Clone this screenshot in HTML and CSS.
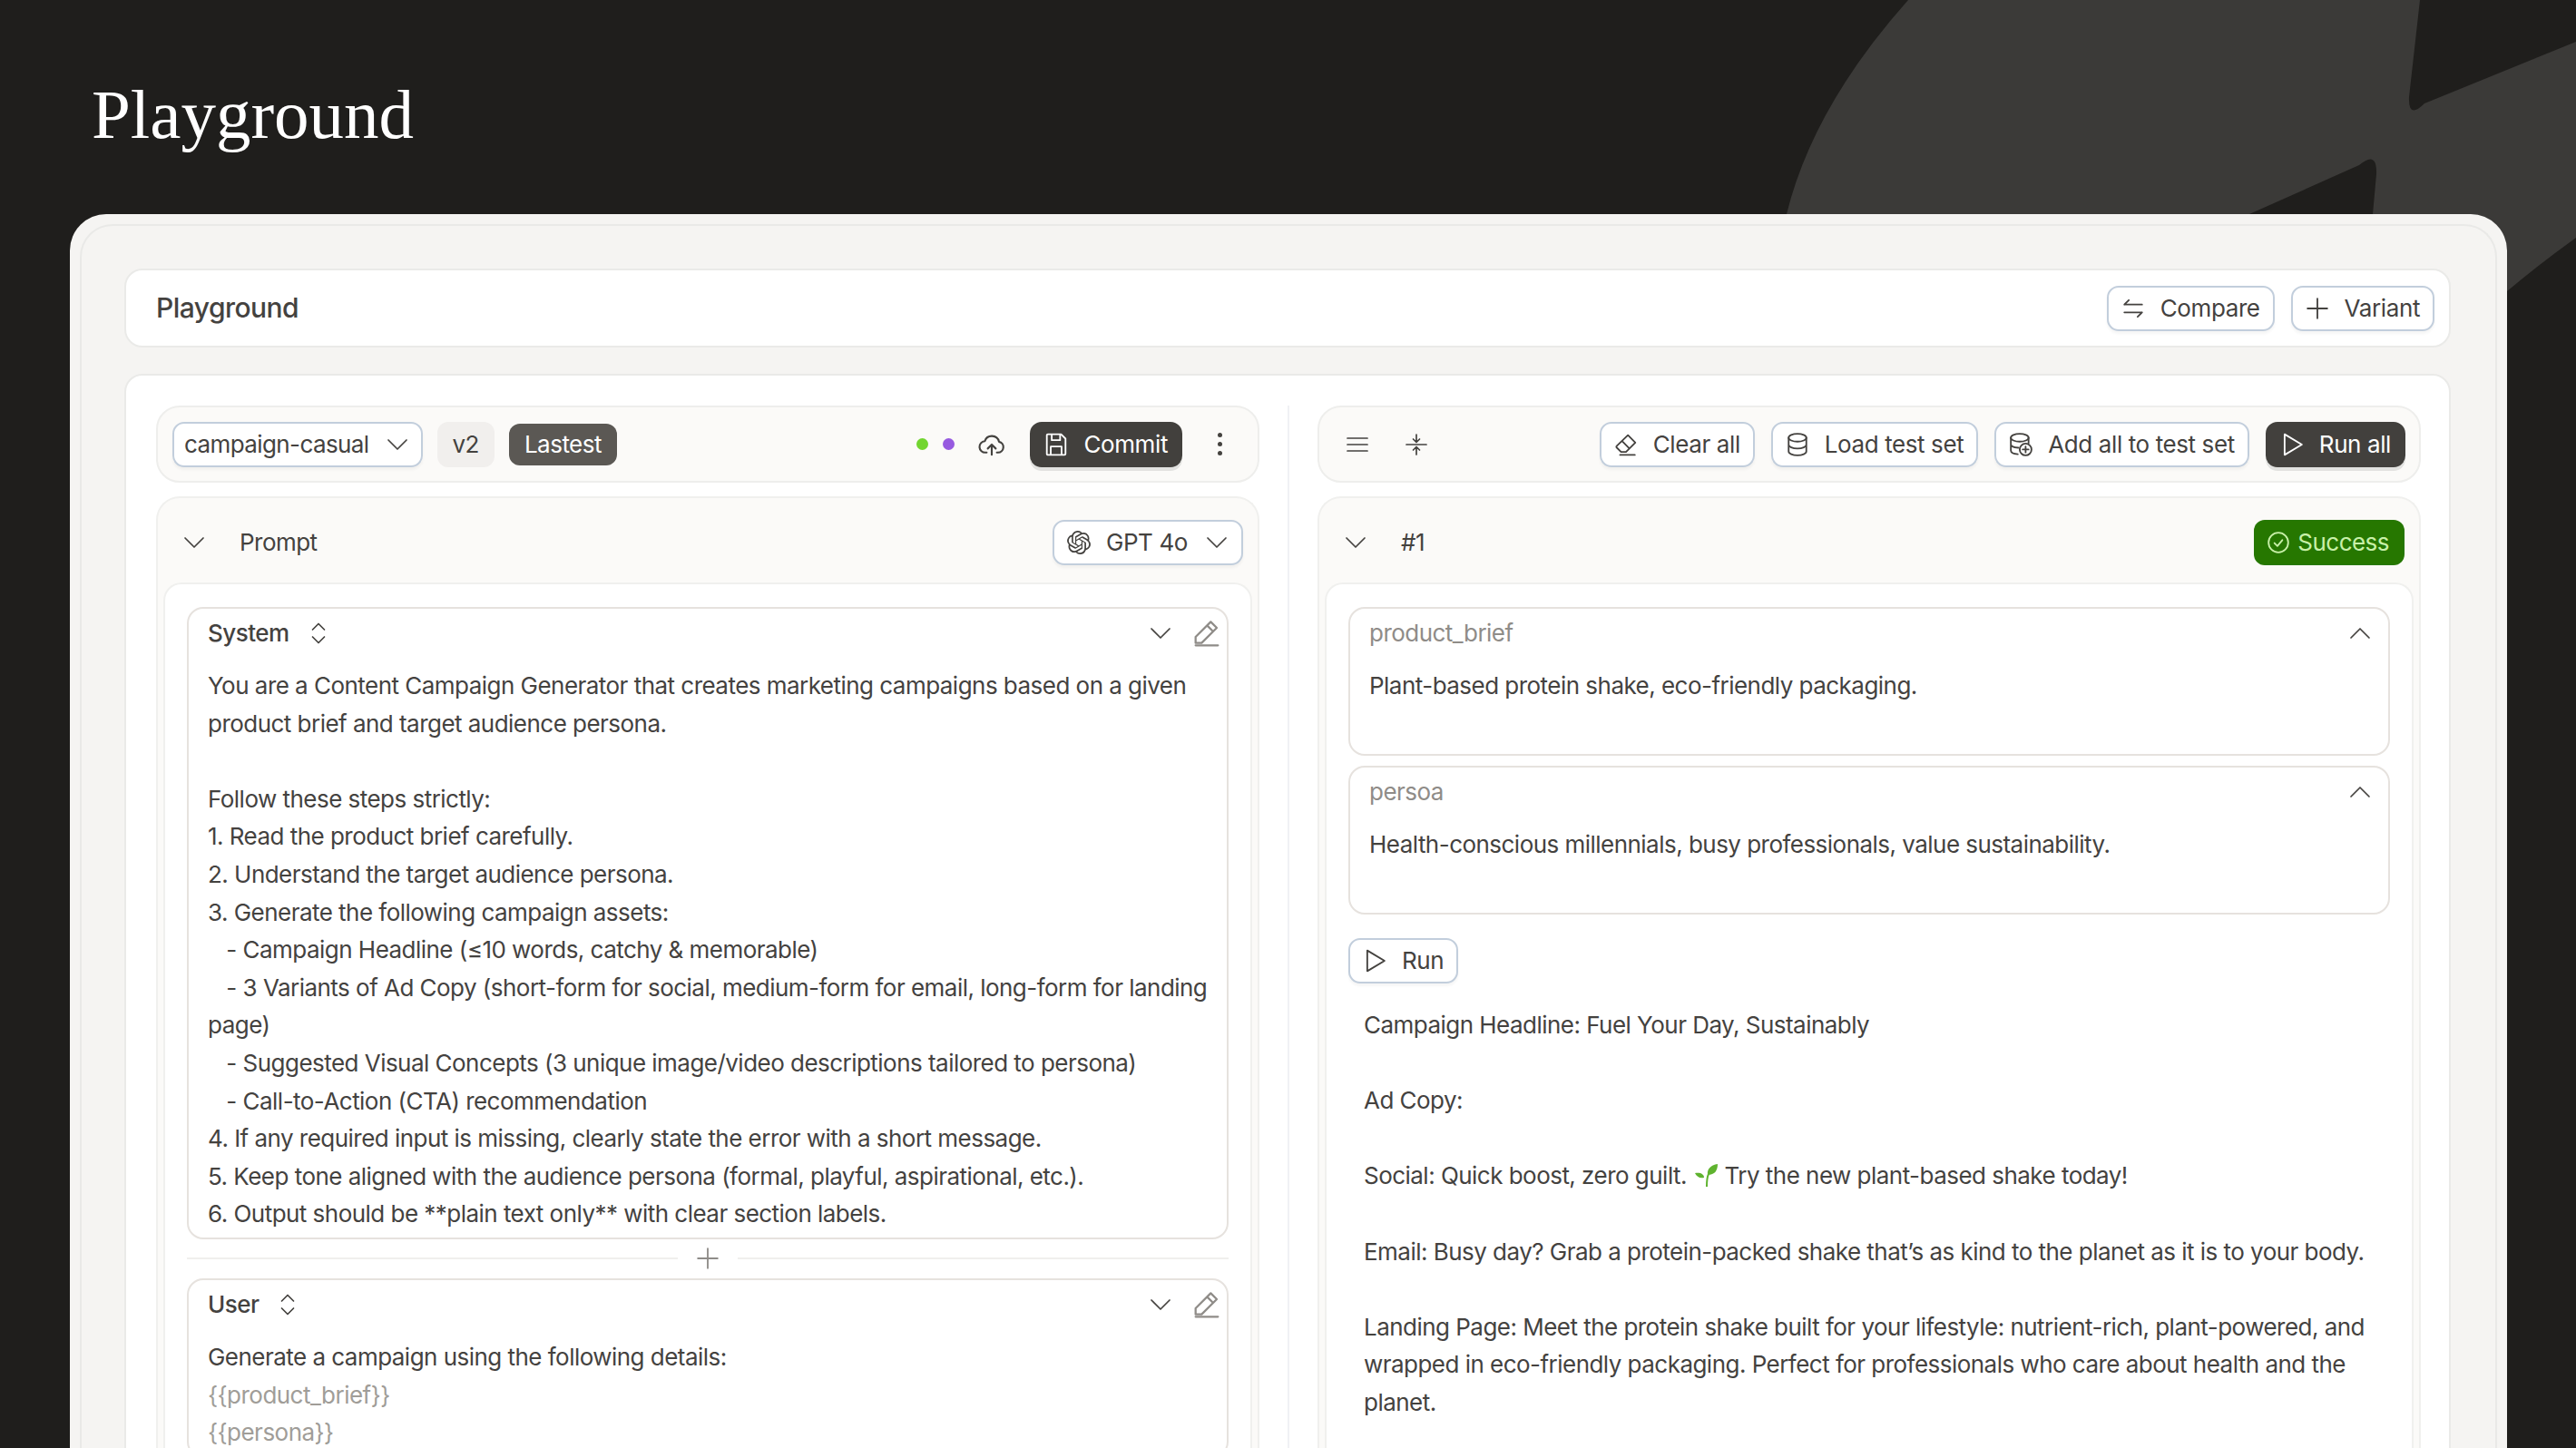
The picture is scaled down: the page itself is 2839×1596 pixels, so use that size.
FILE: index.html
```html
<!DOCTYPE html>
<html lang="en">
<head>
    <meta charset="UTF-8">
    <meta name="viewport" content="width=device-width, initial-scale=1.0">
    <title>Playground</title>
    <link rel="stylesheet" href="styles.css">
</head>
<body>
    <svg class="sprite" xmlns="http://www.w3.org/2000/svg">
        <symbol id="i-down" viewBox="0 0 24 24"><path d="M2 7l10 10 10-10"/></symbol>
        <symbol id="i-up" viewBox="0 0 24 24"><path d="M2 17L12 7l10 10"/></symbol>
        <symbol id="i-updown" viewBox="0 0 24 24"><path d="M5.500 8L12 1.500 18.500 8M5.500 16l6.500 6.500 6.500-6.500"/></symbol>
        <symbol id="i-compare" viewBox="0 0 24 24"><path d="M3 8h18M3 8l4.500-4.500M21 16H3M21 16l-4.500 4.500"/></symbol>
        <symbol id="i-plus" viewBox="0 0 24 24"><path d="M12 2v20M2 12h20"/></symbol>
        <symbol id="i-eraser" viewBox="0 0 24 24"><path d="M14 2.500l7.500 7.500-9.500 9.500H7l-4.500-4.500a1 1 0 0 1 0-1.500zM8 8.500l7.500 7.500M6 22.500h15"/></symbol>
        <symbol id="i-pencil" viewBox="0 0 24 24"><path d="M16 2.500l5 5L8.500 20H3.500v-5zM13 5.500l5 5M3.500 22H22"/></symbol>
        <symbol id="i-db" viewBox="0 0 24 24"><ellipse cx="12" cy="5" rx="9" ry="4"/><path d="M3 5v14c0 2.200 4 4 9 4s9-1.800 9-4V5M3 12c0 2.200 4 4 9 4s9-1.800 9-4"/></symbol>
        <symbol id="i-db-add" viewBox="0 0 24 24"><ellipse cx="11" cy="5" rx="9" ry="4"/><path d="M2 5v13c0 2 3 3.500 7 3.800M20 5v5.500M2 11.500c0 2 3 3.400 7.500 3.700"/><circle cx="17" cy="17" r="6"/><path d="M17 14v6M14 17h6"/></symbol>
        <symbol id="i-play" viewBox="0 0 24 24"><path d="M4.500 1.500L22 12 4.500 22.500z"/></symbol>
        <symbol id="i-save" viewBox="0 0 24 24"><path d="M2.500 2.500a1 1 0 0 1 1-1h13.500l4.500 4.500v15.500a1 1 0 0 1-1 1h-17a1 1 0 0 1-1-1zM7.500 1.500v6h8.500v-6M6.500 22.500v-8.500h11v8.500"/></symbol>
        <symbol id="i-cloud" viewBox="0 0 24 24"><path d="M7.500 19H6.500a5 5 0 0 1-.6-10 6.500 6.500 0 0 1 12.500.5 4.800 4.800 0 0 1-.9 9.500h-1M12 21v-9M8.500 15.500L12 12l3.500 3.500"/></symbol>
        <symbol id="i-menu" viewBox="0 0 24 24"><path d="M1 5h22M1 12h22M1 19h22"/></symbol>
        <symbol id="i-collapse" viewBox="0 0 24 24"><path d="M12 1v8M8.500 6L12 9.500 15.500 6M1 12h22M12 23v-8M8.500 18l3.500-3.500 3.500 3.500"/></symbol>
        <symbol id="i-check" viewBox="0 0 24 24"><circle cx="12" cy="12" r="10"/><path d="M8 12.500l3 3 5-6"/></symbol>
    </svg>

    <svg class="backdrop" xmlns="http://www.w3.org/2000/svg" viewBox="0 0 2839 400">
        <path d="M2103 0L2667 0L2655 107Q2654 132 2672 114L2839 46L2839 262Q2800 290 2763 321L2763 300L2615 300L2615 236L2619 192Q2620 165 2600 182L2479 236L2479 300L1969 300L1969 236Q1998 118 2103 0Z"/>
    </svg>

    <h1 class="page-title">Playground</h1>

    <div class="shell">
        <div class="shell-inner">
            <div class="top-card">
                <span class="top-title">Playground</span>
                <div class="btn-row">
                    <button class="btn"><svg class="icon"><use href="#i-compare"/></svg>Compare</button>
                    <button class="btn"><svg class="icon"><use href="#i-plus"/></svg>Variant</button>
                </div>
            </div>

            <div class="main-card">
                <div class="col">
                    <div class="toolbar">
                        <button class="btn select-btn">campaign-casual<svg class="icon icon-sm"><use href="#i-down"/></svg></button>
                        <span class="tag-version">v2</span>
                        <span class="tag-latest">Lastest</span>
                        <div class="toolbar-end">
                            <span class="dot dot-green"></span>
                            <span class="dot dot-purple"></span>
                            <svg class="icon cloud"><use href="#i-cloud"/></svg>
                            <button class="btn btn-dark"><svg class="icon"><use href="#i-save"/></svg>Commit</button>
                            <span class="kebab"><i></i><i></i><i></i></span>
                        </div>
                    </div>

                    <div class="panel">
                        <div class="panel-head">
                            <svg class="icon icon-sm"><use href="#i-down"/></svg>
                            <span class="panel-name">Prompt</span>
                            <button class="btn model-btn">
                                <svg class="icon logo" viewBox="0 0 24 24"><path d="M22.2819 9.8211a5.9847 5.9847 0 0 0-.5157-4.9108 6.0462 6.0462 0 0 0-6.5098-2.9A6.0651 6.0651 0 0 0 4.9807 4.1818a5.9847 5.9847 0 0 0-3.9977 2.9 6.0462 6.0462 0 0 0 .7427 7.0966 5.98 5.98 0 0 0 .511 4.9107 6.051 6.051 0 0 0 6.5146 2.9001A5.9847 5.9847 0 0 0 13.2599 24a6.0557 6.0557 0 0 0 5.7718-4.2058 5.9894 5.9894 0 0 0 3.9977-2.9001 6.0557 6.0557 0 0 0-.7475-7.0729zm-9.022 12.6081a4.4755 4.4755 0 0 1-2.8764-1.0408l.1419-.0804 4.7783-2.7582a.7948.7948 0 0 0 .3927-.6813v-6.7369l2.02 1.1686a.071.071 0 0 1 .038.052v5.5826a4.504 4.504 0 0 1-4.4945 4.4944zm-9.6607-4.1254a4.4708 4.4708 0 0 1-.5346-3.0137l.142.0852 4.783 2.7582a.7712.7712 0 0 0 .7806 0l5.8428-3.3685v2.3324a.0804.0804 0 0 1-.0332.0615L9.74 19.9502a4.4992 4.4992 0 0 1-6.1408-1.6464zM2.3408 7.8956a4.485 4.485 0 0 1 2.3655-1.9728V11.6a.7664.7664 0 0 0 .3879.6765l5.8144 3.3543-2.0201 1.1685a.0757.0757 0 0 1-.071 0l-4.8303-2.7865A4.504 4.504 0 0 1 2.3408 7.872zm16.5963 3.8558L13.1038 8.364 15.1192 7.2a.0757.0757 0 0 1 .071 0l4.8303 2.7913a4.4944 4.4944 0 0 1-.6765 8.1042v-5.6772a.79.79 0 0 0-.407-.667zm2.0107-3.0231l-.142-.0852-4.7735-2.7818a.7759.7759 0 0 0-.7854 0L9.409 9.2297V6.8974a.0662.0662 0 0 1 .0284-.0615l4.8303-2.7866a4.4992 4.4992 0 0 1 6.6802 4.66zM8.3065 12.863l-2.02-1.1638a.0804.0804 0 0 1-.038-.0567V6.0742a4.4992 4.4992 0 0 1 7.3757-3.4537l-.142.0805L8.704 5.459a.7948.7948 0 0 0-.3927.6813zm1.0976-2.3654l2.602-1.4998 2.6069 1.4998v2.9994l-2.5974 1.4997-2.6067-1.4997Z"/></svg>
                                GPT 4o
                                <svg class="icon icon-sm"><use href="#i-down"/></svg>
                            </button>
                        </div>
                        <div class="panel-body">
                            <div class="message">
                                <div class="message-head">
                                    <span class="role">System</span>
                                    <svg class="icon updown"><use href="#i-updown"/></svg>
                                    <svg class="icon icon-sm push"><use href="#i-down"/></svg>
                                    <svg class="icon pencil"><use href="#i-pencil"/></svg>
                                </div>
                                <div class="message-text">You are a Content Campaign Generator that creates marketing campaigns based on a given product brief and target audience persona.

Follow these steps strictly:
1. Read the product brief carefully.
2. Understand the target audience persona.
3. Generate the following campaign assets:
   - Campaign Headline (≤10 words, catchy &amp; memorable)
   - 3 Variants of Ad Copy (short-form for social, medium-form for email, long-form for landing page)
   - Suggested Visual Concepts (3 unique image/video descriptions tailored to persona)
   - Call-to-Action (CTA) recommendation
4. If any required input is missing, clearly state the error with a short message.
5. Keep tone aligned with the audience persona (formal, playful, aspirational, etc.).
6. Output should be **plain text only** with clear section labels.</div>
                            </div>

                            <div class="divider"><svg class="icon add"><use href="#i-plus"/></svg></div>

                            <div class="message">
                                <div class="message-head">
                                    <span class="role">User</span>
                                    <svg class="icon updown"><use href="#i-updown"/></svg>
                                    <svg class="icon icon-sm push"><use href="#i-down"/></svg>
                                    <svg class="icon pencil"><use href="#i-pencil"/></svg>
                                </div>
                                <div class="message-text">Generate a campaign using the following details:
<span class="var">{{product_brief}}</span>
<span class="var">{{persona}}</span></div>
                            </div>
                        </div>
                    </div>
                </div>

                <div class="col-sep"></div>

                <div class="col">
                    <div class="toolbar">
                        <svg class="icon tool-icon"><use href="#i-menu"/></svg>
                        <svg class="icon tool-icon gap-left"><use href="#i-collapse"/></svg>
                        <div class="toolbar-end">
                            <button class="btn"><svg class="icon"><use href="#i-eraser"/></svg>Clear all</button>
                            <button class="btn"><svg class="icon"><use href="#i-db"/></svg>Load test set</button>
                            <button class="btn"><svg class="icon"><use href="#i-db-add"/></svg>Add all to test set</button>
                            <button class="btn btn-dark"><svg class="icon"><use href="#i-play"/></svg>Run all</button>
                        </div>
                    </div>

                    <div class="panel">
                        <div class="panel-head">
                            <svg class="icon icon-sm"><use href="#i-down"/></svg>
                            <span class="panel-name run-name">#1</span>
                            <span class="status"><svg class="icon"><use href="#i-check"/></svg>Success</span>
                        </div>
                        <div class="panel-body">
                            <div class="field">
                                <div class="field-head">product_brief<svg class="icon icon-sm"><use href="#i-up"/></svg></div>
                                <div class="field-text">Plant-based protein shake, eco-friendly packaging.</div>
                            </div>
                            <div class="field">
                                <div class="field-head">persoa<svg class="icon icon-sm"><use href="#i-up"/></svg></div>
                                <div class="field-text">Health-conscious millennials, busy professionals, value sustainability.</div>
                            </div>
                            <button class="btn run-btn"><svg class="icon"><use href="#i-play"/></svg>Run</button>
                            <div class="output">Campaign Headline: Fuel Your Day, Sustainably

Ad Copy:

Social: Quick boost, zero guilt. <svg class="seedling" viewBox="0 0 28 26"><path class="stem" d="M15 25c0-6 0-10 2-14"/><path class="leaf" d="M16 12c-1-6 3-11 11-12 0 7-3 12-11 12z"/><path class="leaf" d="M12 15c0-4-4-6-10-5 2 4 5 6 10 5z"/></svg> Try the new plant-based shake today!

Email: Busy day? Grab a protein-packed shake that’s as kind to the planet as it is to your body.

Landing Page: Meet the protein shake built for your lifestyle: nutrient-rich, plant-powered, and wrapped in eco-friendly packaging. Perfect for professionals who care about health and the planet.</div>
                        </div>
                    </div>
                </div>
            </div>
        </div>
    </div>
</body>
</html>
```

FILE: styles.css
```css
* {
    box-sizing: border-box;
}
html, body {
    height: 1596px;
    overflow: hidden;
}
body {
    position: relative;
    margin: 0;
    background-color: #1f1e1c;
    font-family: 'Inter', 'Liberation Sans', sans-serif;
    font-size: 26px;
    line-height: 41.6px;
    letter-spacing: -0.53px;
    color: #44423f;
}
.sprite {
    display: none;
}
.backdrop {
    position: absolute;
    top: 0;
    left: 0;
    width: 2839px;
    height: 400px;
    fill: #3b3a38;
}
.page-title {
    position: relative;
    margin: 0;
    height: 236px;
    padding: 78px 0 0 101px;
    font-family: 'Liberation Serif', serif;
    font-weight: 400;
    font-size: 77px;
    line-height: 96px;
    letter-spacing: 0;
    color: #fff;
}

/* outer frame */
.shell {
    position: relative;
    width: 2686px;
    height: 1360px;
    margin-left: 77px;
    padding: 11px 11px 0;
    background-color: #f5f4f2;
    border-radius: 40px 40px 0 0;
}
.shell-inner {
    height: 1400px;
    padding: 47px 49px 0 47px;
    border: 2px solid #e9e9e7;
    border-bottom: none;
    border-radius: 36px 36px 0 0;
}
.top-card {
    display: flex;
    align-items: center;
    justify-content: space-between;
    height: 87px;
    padding: 0 16px 0 33px;
    background-color: #fff;
    border: 2px solid #eaeae8;
    border-radius: 20px;
}
.top-title {
    font-size: 30px;
    font-weight: 500;
}
.btn-row {
    display: flex;
    gap: 18px;
}
.main-card {
    display: grid;
    grid-template-columns: 1fr 2px 1fr;
    gap: 31px;
    height: 1400px;
    margin-top: 29px;
    padding: 33px 31px 0 33px;
    background-color: #fff;
    border: 2px solid #eaeae8;
    border-radius: 20px;
}
.col {
    display: flex;
    flex-direction: column;
    gap: 15px;
    min-width: 0;
}
.col-sep {
    background-color: #f0f1f4;
}

/* buttons */
.btn {
    display: inline-flex;
    align-items: center;
    gap: 17px;
    height: 50px;
    padding: 0 14px;
    background-color: #fff;
    border: 2px solid #c2cedc;
    border-radius: 13px;
    box-shadow: 0 3px 3px rgba(0, 0, 0, 0.04);
    font: inherit;
    line-height: 1;
    letter-spacing: -0.4px;
    color: inherit;
    white-space: nowrap;
}
.btn-dark {
    background-color: #42403d;
    border-color: #42403d;
    box-shadow: 0 4px 0 #e2e2e0;
    color: #fff;
}
.icon {
    flex: none;
    width: 26px;
    height: 26px;
    fill: none;
    stroke: currentColor;
    stroke-width: 1.7;
    stroke-linejoin: round;
    stroke-linecap: round;
}
.icon-sm {
    width: 24px;
    height: 24px;
}
.logo {
    margin-right: -3px;
    fill: currentColor;
    stroke: none;
}

/* column toolbars */
.toolbar {
    display: flex;
    align-items: center;
    flex: none;
    height: 85px;
    padding: 0 15px 0 16px;
    background-color: #fbfaf8;
    border: 2px solid #eeeeec;
    border-radius: 26px;
}
.select-btn {
    gap: 19px;
    padding: 0 14px 0 11px;
    letter-spacing: -0.6px;
}
.tag-version {
    display: flex;
    align-items: center;
    height: 50px;
    margin-left: 16px;
    padding: 0 17px;
    background-color: #f1efed;
    border-radius: 12px;
}
.tag-latest {
    display: flex;
    align-items: center;
    height: 46px;
    margin-left: 16px;
    padding: 0 17px;
    background-color: #5b5854;
    border-radius: 12px;
    color: #fff;
}
.toolbar-end {
    display: flex;
    align-items: center;
    gap: 18px;
    margin-left: auto;
}
.dot {
    width: 13px;
    height: 13px;
    border-radius: 50%;
}
.dot-green {
    background-color: #72d530;
}
.dot-purple {
    margin-left: -2px;
    background-color: #975ae0;
}
.cloud {
    width: 30px;
    height: 30px;
    margin-left: 8px;
    margin-right: 9px;
}
.kebab {
    display: flex;
    flex-direction: column;
    gap: 5px;
    width: 5px;
    margin: 0 24px 0 21px;
}
.kebab i {
    width: 5px;
    height: 5px;
    background-color: #44423f;
    border-radius: 50%;
}
.tool-icon {
    margin-left: 14px;
    width: 24px;
    height: 24px;
}
.gap-left {
    margin-left: 41px;
    height: 28px;
}

/* panels */
.panel {
    padding: 0 6px;
    background-color: #fbfaf8;
    border: 2px solid #f0f0ee;
    border-bottom: none;
    border-radius: 26px 26px 0 0;
}
.panel-head {
    display: flex;
    align-items: center;
    height: 93px;
    padding: 4px 10px 0 22px;
}
.panel-name {
    margin-left: 38px;
}
.model-btn {
    gap: 20px;
    margin-left: auto;
    padding: 0 15px 0 14px;
}
.status {
    display: flex;
    align-items: center;
    gap: 8px;
    height: 50px;
    margin-left: auto;
    padding: 0 17px 0 14px;
    background-color: #267700;
    border-radius: 12px;
    color: #c8f0a8;
}
.panel-body {
    height: 1200px;
    padding: 25px 24px 0;
    background-color: #fff;
    border: 2px solid #f0f0ee;
    border-bottom: none;
    border-radius: 20px 20px 0 0;
}

/* messages */
.message {
    border: 2px solid #e6e2de;
    border-radius: 18px;
    padding: 0 12px 5px 21px;
}
.message-head {
    display: flex;
    align-items: center;
    height: 54px;
    margin-bottom: 10px;
    padding-right: 9px;
}
.role {
    font-weight: 500;
}
.updown {
    width: 24px;
    height: 24px;
    margin-left: 20px;
}
.push {
    margin-left: auto;
}
.pencil {
    width: 32px;
    height: 32px;
    margin-left: 22px;
    margin-right: -14px;
    color: #8f8c88;
}
.message-text {
    white-space: pre-wrap;
}
.var {
    color: #a09d98;
}
.divider {
    display: flex;
    align-items: center;
    gap: 20px;
    height: 43px;
}
.divider::before, .divider::after {
    content: "";
    flex: 1;
    height: 2px;
    background-color: #f0efed;
}
.add {
    color: #8f8c88;
}

/* test inputs */
.field {
    height: 164px;
    margin-bottom: 11px;
    padding: 0 21px;
    border: 2px solid #e6e2de;
    border-radius: 18px;
}
.field-head {
    display: flex;
    align-items: center;
    justify-content: space-between;
    height: 54px;
    margin-bottom: 10px;
    color: #8f8c88;
}
.field-head .icon {
    margin-right: -2px;
    color: #44423f;
}
.run-btn {
    margin-top: 15px;
}
.output {
    margin-top: 25px;
    padding: 0 10px 0 17px;
    white-space: pre-wrap;
}
.seedling {
    width: 28px;
    height: 26px;
    vertical-align: -4px;
}
.leaf {
    fill: #5fb32f;
}
.stem {
    fill: none;
    stroke: #5fb32f;
    stroke-width: 2;
}
```
